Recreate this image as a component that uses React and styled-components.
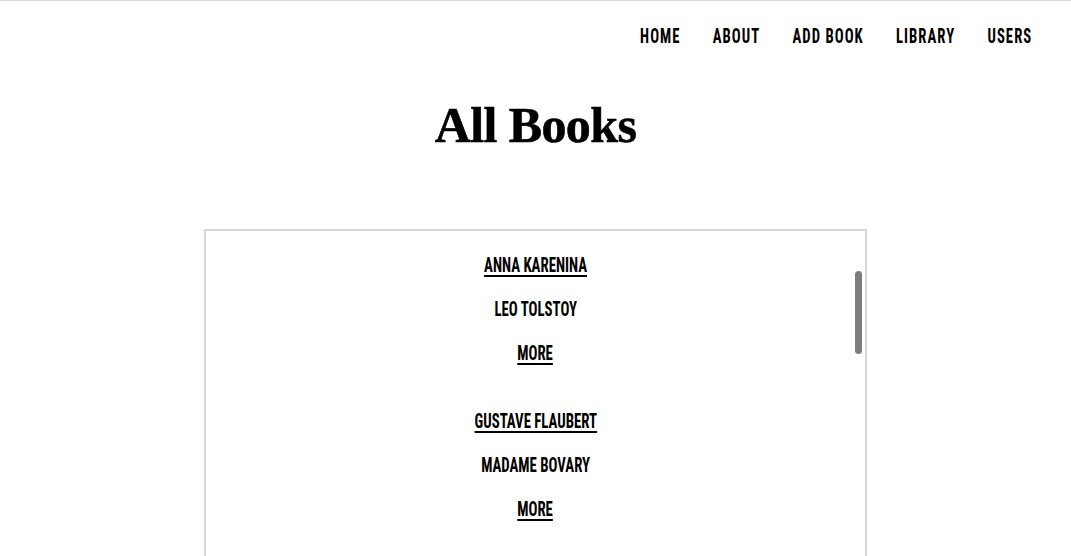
import React from 'react';
import styled, { createGlobalStyle } from 'styled-components';

const GlobalStyle = createGlobalStyle`
  html, body {
    margin: 0;
    padding: 0;
    background: #fff;
    overflow: hidden;
  }
`;

const condensed = `"Roboto Condensed", "Open Sans Condensed", "DejaVu Sans Condensed", sans-serif`;

const Page = styled.div`
  border-top: 1px solid #dcdcdc;
  min-height: 100vh;
`;

const Nav = styled.nav`
  display: flex;
  justify-content: flex-end;
  align-items: center;
  height: 69px;
  padding-right: 39px;
`;

// the reference face is narrower than anything installed, so squeeze the row
const NavList = styled.div`
  display: flex;
  align-items: center;
  gap: 46px;
  transform: scaleX(0.7);
  transform-origin: right center;
`;

const NavLink = styled.a`
  font-family: ${condensed};
  font-weight: 700;
  font-size: 21px;
  letter-spacing: 1.5px;
  color: #000;
  text-decoration: none;
`;

const Title = styled.h1`
  margin: 25px 0 0;
  text-align: center;
  font-family: "Liberation Serif", serif;
  font-weight: 700;
  font-size: 50px;
  line-height: 60px;
  letter-spacing: -0.6px;
  -webkit-text-stroke: 0.6px #000;
`;

const ListBox = styled.section`
  position: relative;
  width: 663px;
  height: 400px;
  margin: 74px auto 0;
  border: 2px solid #d6d6d6;
  padding-top: 24px;
  box-sizing: border-box;
`;

const Thumb = styled.div`
  position: absolute;
  top: 40px;
  right: 3px;
  width: 7px;
  height: 83px;
  border-radius: 4px;
  background: #7d7d7d;
`;

const Entry = styled.article`
  display: flex;
  flex-direction: column;
  align-items: center;
  gap: 24px;
  margin-bottom: 48px;
`;

const Line = styled.span`
  display: inline-block;
  transform: scaleX(0.74);
  font-family: ${condensed};
  font-weight: 700;
  font-size: 20px;
  line-height: 20px;
  color: #000;
  text-decoration: ${(p) => (p.$link ? 'underline' : 'none')};
  text-underline-offset: 3px;
  text-decoration-thickness: 2px;
`;

const books = [
  { first: 'ANNA KARENINA', second: 'LEO TOLSTOY' },
  { first: 'GUSTAVE FLAUBERT', second: 'MADAME BOVARY' },
];

export default function App() {
  return (
    <>
      <GlobalStyle />
      <Page>
        <Nav>
          <NavList>
            {['HOME', 'ABOUT', 'ADD BOOK', 'LIBRARY', 'USERS'].map((item) => (
              <NavLink key={item} href='#'>
                {item}
              </NavLink>
            ))}
          </NavList>
        </Nav>
        <Title>All Books</Title>
        <ListBox>
          <Thumb />
          {books.map((b) => (
            <Entry key={b.first}>
              <Line $link>{b.first}</Line>
              <Line>{b.second}</Line>
              <Line $link>MORE</Line>
            </Entry>
          ))}
        </ListBox>
      </Page>
    </>
  );
}
